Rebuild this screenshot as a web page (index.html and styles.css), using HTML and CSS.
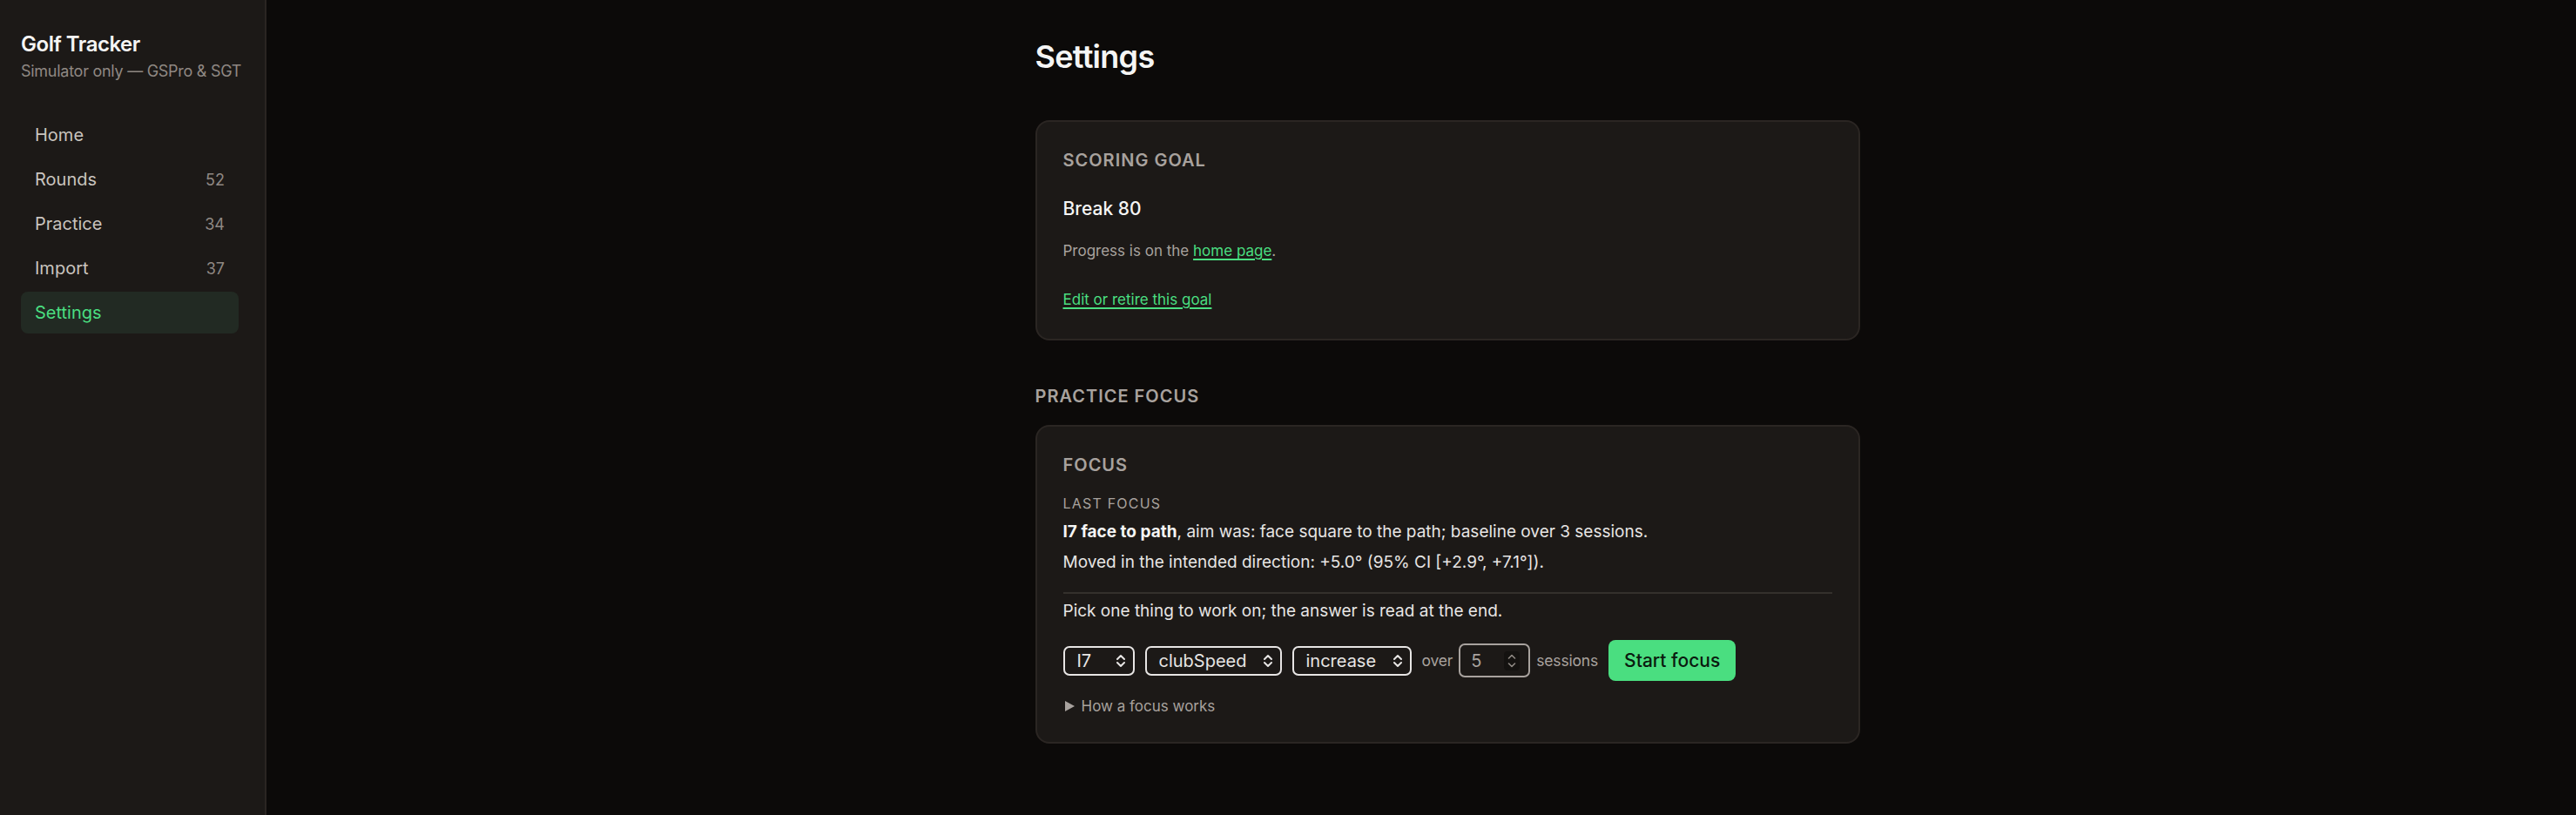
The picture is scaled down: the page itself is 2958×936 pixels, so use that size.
FILE: index.html
```html
<!DOCTYPE html>
<html lang="en">
<head>
<meta charset="utf-8">
<title>Settings · Golf Tracker</title>
<link rel="stylesheet" href="styles.css">
</head>
<body>
<div class="app">
  <aside class="sidebar">
    <div class="brand">Golf Tracker</div>
    <div class="tagline">Simulator only — GSPro &amp; SGT</div>
    <nav class="nav">
      <a class="nav-item" href="#">Home</a>
      <a class="nav-item" href="#">Rounds<span class="count">52</span></a>
      <a class="nav-item" href="#">Practice<span class="count">34</span></a>
      <a class="nav-item" href="#">Import<span class="count">37</span></a>
      <a class="nav-item active" href="#">Settings</a>
    </nav>
  </aside>

  <main class="main">
    <div class="column">
      <h1 class="page-title">Settings</h1>

      <section class="card goal-card">
        <h2 class="card-title">Scoring goal</h2>
        <div class="goal-name">Break 80</div>
        <p class="muted-line">Progress is on the <a class="link" href="#">home page</a>.</p>
        <p class="edit-line"><a class="link" href="#">Edit or retire this goal</a></p>
      </section>

      <h2 class="section-title">Practice focus</h2>

      <section class="card focus-card">
        <h2 class="card-title">Focus</h2>
        <div class="eyebrow">Last focus</div>
        <p class="body-line first"><strong>I7 face to path</strong>, aim was: face square to the path; baseline over 3 sessions.</p>
        <p class="body-line">Moved in the intended direction: +5.0° (95% CI [+2.9°, +7.1°]).</p>
        <div class="divider"></div>
        <p class="body-line pick">Pick one thing to work on; the answer is read at the end.</p>

        <form class="controls" onsubmit="return false">
          <span class="select-wrap">
            <select class="select"><option>I7</option></select>
            <svg class="chev" viewBox="0 0 12 18" width="12" height="18" aria-hidden="true"><path d="M2 7l4-4 4 4M2 11l4 4 4-4" fill="none" stroke="currentColor" stroke-width="2" stroke-linecap="round" stroke-linejoin="round"/></svg>
          </span>
          <span class="select-wrap">
            <select class="select"><option>clubSpeed</option></select>
            <svg class="chev" viewBox="0 0 12 18" width="12" height="18" aria-hidden="true"><path d="M2 7l4-4 4 4M2 11l4 4 4-4" fill="none" stroke="currentColor" stroke-width="2" stroke-linecap="round" stroke-linejoin="round"/></svg>
          </span>
          <span class="select-wrap">
            <select class="select"><option>increase</option></select>
            <svg class="chev" viewBox="0 0 12 18" width="12" height="18" aria-hidden="true"><path d="M2 7l4-4 4 4M2 11l4 4 4-4" fill="none" stroke="currentColor" stroke-width="2" stroke-linecap="round" stroke-linejoin="round"/></svg>
          </span>
          <span class="over-group">
            <span class="unit">over</span>
            <span class="numbox">
              <input class="num" type="text" value="5" inputmode="numeric">
              <span class="spin">
                <svg viewBox="0 0 12 20" width="12" height="20" aria-hidden="true"><path d="M2.5 7l3.5-3.5L9.5 7M2.5 13l3.5 3.5L9.5 13" fill="none" stroke="currentColor" stroke-width="1.6" stroke-linecap="round" stroke-linejoin="round"/></svg>
              </span>
            </span>
            <span class="unit">sessions</span>
          </span>
          <button class="btn" type="submit">Start focus</button>
        </form>

        <details class="how">
          <summary>How a focus works</summary>
        </details>
      </section>
    </div>
  </main>
</div>
</body>
</html>
```

FILE: styles.css
```css
* { box-sizing: border-box; }

html, body {
  margin: 0;
  height: 100%;
}

body {
  background: #0c0a09;
  color: #e7e5e4;
  font-family: Inter, "Noto Sans", "Liberation Sans", sans-serif;
}

.app {
  display: flex;
  min-height: 100vh;
}

/* ---------- sidebar ---------- */
.sidebar {
  width: 306px;
  flex: 0 0 306px;
  background: #1c1917;
  border-right: 2px solid #2a2522;
  padding: 36px 30px 0 24px;
}

.brand {
  font-size: 24px;
  line-height: 30px;
  font-weight: 600;
  letter-spacing: -0.02em;
  color: #f5f5f4;
}

.tagline {
  margin-top: 4px;
  margin-right: -24px;
  font-size: 18px;
  line-height: 24px;
  color: #8f8883;
  letter-spacing: -0.015em;
  white-space: nowrap;
}

.nav {
  display: flex;
  flex-direction: column;
  gap: 3px;
  margin-top: 37px;
}

.nav-item {
  display: flex;
  align-items: center;
  justify-content: space-between;
  height: 48px;
  padding: 0 16px;
  border-radius: 8px;
  font-size: 20px;
  color: #c9c4bf;
  text-decoration: none;
}

.nav-item .count {
  font-size: 18px;
  color: #8f8883;
}

.nav-item.active {
  background: #222a23;
  color: #4ade80;
}

/* ---------- main ---------- */
.main {
  flex: 1;
  padding: 44px 0 60px 60px;
}

.column {
  width: 947px;
  margin: 0 auto;
}

.page-title {
  margin: 0;
  font-size: 36px;
  line-height: 43px;
  font-weight: 600;
  letter-spacing: -0.02em;
  color: #f5f5f4;
}

.card {
  background: #1c1917;
  border: 2px solid #2b2623;
  border-radius: 16px;
  padding: 30px 30px 32px;
}

.goal-card { margin-top: 51px; }

.card-title,
.section-title {
  margin: 0;
  font-size: 20px;
  line-height: 28px;
  font-weight: 600;
  letter-spacing: 1px;
  text-transform: uppercase;
  color: #a8a29e;
}

.section-title {
  margin-top: 50px;
  margin-bottom: 19px;
}

.goal-name {
  margin-top: 27px;
  font-size: 21px;
  line-height: 30px;
  font-weight: 500;
  color: #f5f5f4;
}

.muted-line {
  margin: 20px 0 0;
  font-size: 17px;
  line-height: 26px;
  color: #a8a29e;
}

.edit-line {
  margin: 30px 0 0;
  font-size: 17px;
  line-height: 26px;
}

.link {
  color: #4ade80;
  text-decoration: underline;
  text-decoration-thickness: 2px;
  text-underline-offset: 3px;
}

/* ---------- focus card ---------- */
.focus-card { padding-bottom: 28px; }

.eyebrow {
  margin-top: 19px;
  font-size: 16px;
  line-height: 22px;
  letter-spacing: 1.2px;
  text-transform: uppercase;
  color: #a8a29e;
}

.body-line {
  margin: 5px 0 0;
  font-size: 19px;
  line-height: 30px;
  color: #e7e5e4;
}

.body-line.first { margin-top: 7px; }

.body-line strong {
  font-weight: 700;
  color: #f5f5f4;
}

.divider {
  height: 2px;
  background: #34302c;
  margin-top: 19px;
}

.body-line.pick { margin-top: 5px; }

.controls {
  display: flex;
  align-items: center;
  gap: 12px;
  margin-top: 18px;
}

.select-wrap {
  position: relative;
  display: inline-flex;
}

.select {
  appearance: none;
  -webkit-appearance: none;
  min-width: 82px;
  height: 34px;
  padding: 0 38px 0 14px;
  background: #1c1917;
  border: 2px solid #e7e5e4;
  border-radius: 7px;
  color: #e7e5e4;
  font-family: inherit;
  font-size: 20px;
  line-height: 30px;
}

.chev {
  position: absolute;
  right: 10px;
  top: 8px;
  color: #e7e5e4;
  pointer-events: none;
}

.over-group {
  display: inline-flex;
  align-items: center;
  gap: 7px;
}

.unit {
  font-size: 17.5px;
  letter-spacing: -0.01em;
  color: #a8a29e;
}

.numbox {
  display: inline-flex;
  align-items: center;
  width: 82px;
  height: 39px;
  padding: 0 10px 0 12px;
  border: 2px solid #a8a29e;
  border-radius: 7px;
  background: #1c1917;
}

.num {
  flex: 1;
  width: 100%;
  min-width: 0;
  border: 0;
  padding: 0;
  background: transparent;
  color: #a8a29e;
  font-family: inherit;
  font-size: 20px;
  outline: none;
}

.spin {
  display: inline-flex;
  align-items: center;
  justify-content: center;
  width: 18px;
  height: 22px;
  border-radius: 4px;
  background: #141210;
  color: #8f8883;
}

.btn {
  height: 47px;
  padding: 0 18px;
  border: 0;
  border-radius: 8px;
  background: #4ade80;
  color: #0a1a0f;
  font-family: inherit;
  font-size: 21px;
  font-weight: 500;
}

.how {
  margin-top: 16px;
  font-size: 17px;
  line-height: 26px;
  color: #a8a29e;
}

.how summary {
  display: flex;
  align-items: center;
  gap: 8px;
  list-style: none;
  cursor: pointer;
}

.how summary::-webkit-details-marker { display: none; }

.how summary::before {
  content: "";
  width: 0;
  height: 0;
  margin-left: 2px;
  border-top: 6px solid transparent;
  border-bottom: 6px solid transparent;
  border-left: 11px solid #a8a29e;
}
```
